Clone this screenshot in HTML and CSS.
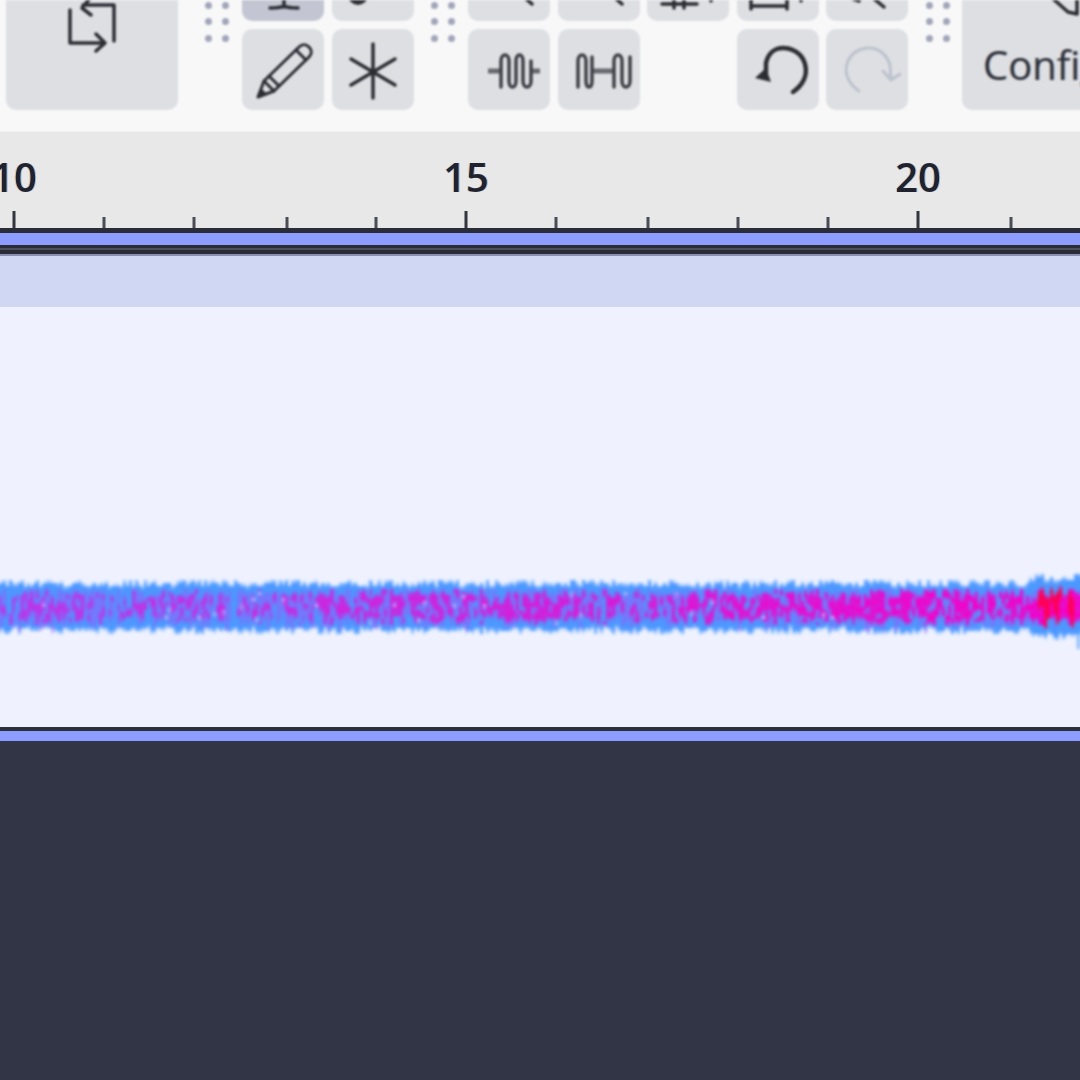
FILE: index.html
```html
<!DOCTYPE html>
<html lang="en">
<head>
    <meta charset="UTF-8">
    <meta name="viewport" content="width=device-width, initial-scale=1.0">
    <title>Audio editor</title>
    <link rel="stylesheet" href="styles.css">
</head>
<body>
    <div class="toolbar-clip">
    <div class="toolbar">
        <button class="tool tool-large" type="button">
            <svg class="icon" viewBox="0 0 172 110">
                <path d="M64 10V43H97M108 41V5H77"/>
                <path d="M85 -3L76 8L85 15M90 34L99 43L90 51"/>
            </svg>
        </button>
        <div class="grip"><i></i><i></i><i></i><i></i><i></i><i></i></div>
        <div class="tool-group tool-group-mode">
            <button class="tool tool-active" type="button">
                <svg class="icon" viewBox="0 0 82 21"><path d="M42 -2V7M28 8C34 8 38 8 42 6C46 8 50 8 56 8"/></svg>
            </button>
            <button class="tool" type="button">
                <svg class="icon" viewBox="0 0 82 21"><circle class="solid" cx="26" cy="-5" r="10"/></svg>
            </button>
            <button class="tool" type="button">
                <svg class="icon icon-thin" viewBox="0 0 82 81">
                    <path d="M16 68L22 52L57 18C60 15 64 15 67 18C70 21 70 25 67 28L32 62Z"/>
                    <path d="M22 52L32 62M54 21L64 31M27 47L37 57"/>
                    <path class="solid" d="M16 68L19 59L25 65Z"/>
                </svg>
            </button>
            <button class="tool" type="button">
                <svg class="icon" viewBox="0 0 82 81">
                    <path d="M41 15V69M19 30L63 56M19 56L63 30"/>
                    <circle class="solid" cx="41" cy="43" r="3.5"/>
                </svg>
            </button>
        </div>
        <div class="grip"><i></i><i></i><i></i><i></i><i></i><i></i></div>
        <div class="tool-group tool-group-edit">
            <button class="tool" type="button">
                <svg class="icon" viewBox="0 0 82 21"><path d="M56 -3L64 4"/></svg>
            </button>
            <button class="tool" type="button">
                <svg class="icon" viewBox="0 0 82 21"><path d="M56 -3L64 4"/></svg>
            </button>
            <button class="tool" type="button">
                <svg class="icon" viewBox="0 0 82 21">
                    <path d="M15 4H50M27 1V8M37 1V8"/>
                    <path d="M64 0V1"/>
                </svg>
            </button>
            <button class="tool" type="button">
                <svg class="icon" viewBox="0 0 82 21">
                    <path d="M14 -2V9M14 6H50M50 -2V9M64 0V1"/>
                </svg>
            </button>
            <button class="tool" type="button">
                <svg class="icon" viewBox="0 0 82 21"><path d="M25 -2L33 1M47 -2L58 7"/></svg>
            </button>
            <button class="tool" type="button">
                <svg class="icon icon-wave" viewBox="0 0 82 81">
                    <path class="wave-line" d="M20 42H32M63 42H72"/>
                    <path d="M33 58V32C33 24 41 24 41 32V52C41 60 48 60 48 52V32C48 24 55 24 55 32V52C55 60 63 60 63 52V32"/>
                </svg>
            </button>
            <button class="tool" type="button">
                <svg class="icon icon-wave" viewBox="0 0 82 81">
                    <path class="wave-line" d="M34 42H56"/>
                    <path d="M20 58V32C20 24 28 24 28 32V52C28 60 34 60 34 52V28M56 58V32C56 24 64 24 64 32V52C64 60 72 60 72 52V28"/>
                </svg>
            </button>
            <span class="tool-empty"></span>
            <button class="tool" type="button">
                <svg class="icon icon-history" viewBox="0 0 82 81">
                    <path d="M56 63C66 56 71 46 68 35C65 24 55 19 46 19C37 19 31 25 29 34L29 44"/>
                    <path class="solid" d="M18 49L29 39L34 53Z"/>
                </svg>
            </button>
            <button class="tool" type="button">
                <svg class="icon icon-history icon-disabled" viewBox="0 0 82 81">
                    <path d="M33 62C23 55 18 45 21 35C24 24 34 19 43 19C53 19 61 26 64 36L65 50"/>
                    <path d="M57 42L65 51L74 45"/>
                </svg>
            </button>
        </div>
        <div class="grip"><i></i><i></i><i></i><i></i><i></i><i></i></div>
        <button class="tool tool-config" type="button">
            <svg class="icon icon-corner" viewBox="0 0 118 21"><path d="M88 -4L106 12L115 14V-4"/></svg>
            <span class="tool-label">Configuración</span>
        </button>
    </div>
    </div>

    <div class="ruler">
        <svg class="ruler-scale" viewBox="0 0 1080 96">
            <text x="14" y="60">10</text>
            <text x="466" y="60">15</text>
            <text x="918" y="60">20</text>
            <path class="tick-major" d="M14 79V96M466 79V96M918 79V96"/>
            <path class="tick-minor" d="M104 85V96M194 85V96M287 85V96M376 85V96M556 85V96M648 85V96M738 85V96M828 85V96M1011 85V96"/>
        </svg>
    </div>

    <div class="timeline-top"></div>
    <div class="clip-name"></div>
    <div class="clip-body">
        <canvas id="wave" class="wave" width="364" height="140"></canvas>
    </div>
    <div class="timeline-bottom"></div>
    <div class="empty-area"></div>

    <script src="script.js"></script>
</body>
</html>
```

FILE: styles.css
```css
body {
    margin: 0;
    width: 1080px;
    height: 1080px;
    overflow: hidden;
    display: flex;
    flex-direction: column;
    background-color: #323545;
    font-family: 'Open Sans', 'Liberation Sans', sans-serif;
}

.toolbar-clip {
    height: 131px;
    flex: none;
    background-color: #f8f8f9;
    border-bottom: 1px solid #f0f0f1;
    overflow: hidden;
}

.toolbar {
    width: 1092px;
    height: 145px;
    box-sizing: border-box;
    margin: -6px 0 0 -6px;
    padding: 6px 0 0 6px;
    display: flex;
    align-items: flex-start;
    background-color: #f8f8f9;
    filter: blur(0.9px);
}

.tool {
    display: block;
    position: relative;
    width: 100%;
    height: 100%;
    padding: 0;
    border: none;
    border-radius: 0 0 10px 10px;
    background-color: #dedfe3;
    font-family: inherit;
    overflow: hidden;
}

.tool-group .tool:nth-child(n+3),
.tool-group-edit .tool:nth-child(n+6) {
    border-radius: 10px;
}

.tool-group-edit .tool:nth-child(-n+5) {
    border-radius: 0 0 10px 10px;
}

.tool-active {
    background-color: #c3c6d2;
}

.tool-large {
    width: 172px;
    height: 110px;
    margin-left: 6px;
    flex: none;
}

.tool-group {
    display: grid;
    grid-template-rows: 21px 81px;
    row-gap: 8px;
    flex: none;
}

.tool-group-mode {
    grid-template-columns: repeat(2, 82px);
    column-gap: 8px;
}

.tool-group-edit {
    grid-template-columns: repeat(5, 82px);
    column-gap: 7.5px;
}

.tool-config {
    width: 130px;
    height: 110px;
    flex: none;
    margin-left: 12.5px;
    border-radius: 0 0 0 10px;
}

.tool-label {
    position: absolute;
    left: 21px;
    top: 37px;
    font-size: 40px;
    line-height: 56px;
    white-space: nowrap;
    color: #2c2f3a;
    text-shadow: -1px 0 rgba(214, 130, 40, 0.35), 1px 0 rgba(40, 130, 220, 0.35);
}

.grip {
    flex: none;
    display: grid;
    grid-template-columns: 7px 7px;
    column-gap: 10px;
    row-gap: 9.5px;
    padding-top: 1.5px;
}

.grip i {
    width: 7px;
    height: 7px;
    border-radius: 50%;
    background-color: #a3a6ba;
}

.toolbar > .grip:nth-child(2) {
    margin: 0 13px 0 27px;
}

.toolbar > .grip:nth-child(4) {
    margin: 0 13.5px 0 16.5px;
}

.toolbar > .grip:nth-child(6) {
    margin: 0 0 0 17.5px;
}

.icon {
    display: block;
    width: 100%;
    height: 100%;
    overflow: visible;
    fill: none;
    stroke: #2b2d33;
    stroke-width: 3.5;
    stroke-linecap: round;
    stroke-linejoin: round;
}

.icon .solid {
    fill: #2b2d33;
    stroke: none;
}

.icon-thin {
    stroke-width: 3;
}

.icon-wave {
    stroke: #3e4046;
    stroke-width: 3.5;
}

.icon-wave .wave-line {
    stroke: #66686f;
    stroke-width: 5;
    stroke-linecap: butt;
}

.icon-history {
    stroke-width: 4.5;
}

.icon-disabled {
    stroke: #bcc3cd;
    stroke-width: 3;
}

.icon-corner {
    position: absolute;
    top: 0;
    left: 0;
    width: 118px;
    height: 21px;
}

.ruler {
    height: 96px;
    flex: none;
    background-color: #e8e8e9;
    overflow: hidden;
}

.ruler-scale {
    display: block;
    width: 1080px;
    height: 96px;
    filter: blur(0.7px);
}

.ruler-scale text {
    font-size: 40px;
    font-weight: 600;
    text-anchor: middle;
    fill: #20232f;
    text-shadow: -1px 0 rgba(214, 130, 40, 0.45), 1px 0 rgba(40, 130, 220, 0.45);
}

.tick-major,
.tick-minor {
    fill: none;
    stroke-width: 3;
    stroke: #33353f;
}

.tick-minor {
    stroke: #4a4c56;
}

.timeline-top {
    height: 28px;
    flex: none;
    margin: 0 -6px;
    background:
        linear-gradient(#2a2c38, #2a2c38) 0 0 / 100% 5px no-repeat,
        linear-gradient(#2a2c38, #2a2c38) 0 17px / 100% 3px no-repeat,
        linear-gradient(#4c4e5a, #4c4e5a) 0 20px / 100% 2px no-repeat,
        linear-gradient(#2a2c38, #2a2c38) 0 22px / 100% 4px no-repeat,
        linear-gradient(#8b90b0, #8b90b0) 0 26px / 100% 2px no-repeat,
        #8c9cff;
    filter: blur(0.5px);
}

.clip-name {
    height: 51px;
    flex: none;
    background-color: #d0d7f2;
}

.clip-body {
    height: 420px;
    flex: none;
    background-color: #eff2fe;
    overflow: hidden;
}

.wave {
    display: block;
    width: 1092px;
    height: 420px;
    margin-left: -6px;
    filter: blur(1.4px);
}

.timeline-bottom {
    height: 14px;
    flex: none;
    box-sizing: border-box;
    margin: 0 -6px;
    background-color: #8c9cff;
    border-top: 4px solid #2d2f3b;
    filter: blur(0.5px);
}

.empty-area {
    flex: 1;
    background-color: #323545;
}
```

FILE: script.js
```js
document.addEventListener('DOMContentLoaded', function () {
    const canvas = document.getElementById('wave');
    const ctx = canvas.getContext('2d');
    const center = 100;

    let seed = 4711;
    function rnd() {
        seed = (seed * 16807) % 2147483647;
        return seed / 2147483647;
    }

    // violeta a la izquierda, rosa a la derecha
    function innerColor(x) {
        const t = x / 345;
        const r = Math.round(185 + 60 * t);
        const g = Math.round(55 - 55 * t);
        const b = Math.round(235 - 35 * t);
        return `rgb(${r}, ${g}, ${b})`;
    }

    // el canvas empieza 2px antes del borde de la pagina
    for (let c = 0; c < 364; c++) {
        const x = c - 2;
        const loud = x > 342 ? 2 : 0;
        const up = 6.5 + rnd() * 2.5 + loud;
        const down = 6.5 + rnd() * 2.5 + loud;

        ctx.fillStyle = 'rgb(76, 152, 255)';
        ctx.fillRect(c, center - up, 1, up + down);

        // capa intermedia mas violeta, irregular por columna
        if (rnd() > 0.2) {
            ctx.fillStyle = 'rgba(140, 100, 250, 0.6)';
            ctx.fillRect(c, center - 3 - rnd() * 3, 1, 6 + rnd() * 6);
        }

        const patch = Math.sin(x / 9) + Math.sin(x / 23 + 1);
        const chance = 0.3 + x / 800 + patch * 0.1;
        const reach = 3 + rnd() * 3;
        let pos = center - reach;
        while (pos < center + reach) {
            const len = 1 + rnd() * 2.5;
            if (rnd() < chance || x > 345) {
                ctx.fillStyle = innerColor(x);
                ctx.fillRect(c, pos, 1, Math.min(len, center + reach - pos));
            }
            pos += len;
        }

        if (x > 345 && x < 358 && rnd() > 0.3) {
            ctx.fillStyle = 'rgb(255, 0, 85)';
            ctx.fillRect(c, center - 2 - rnd() * 5, 1, 4 + rnd() * 8);
        }

        if (rnd() > 0.9 && x < 280) {
            ctx.fillStyle = 'rgb(200, 205, 255)';
            ctx.fillRect(c, center - 5 + rnd() * 10, 1, 1);
        }
    }

    ctx.fillStyle = 'rgba(70, 150, 255, 0.7)';
    ctx.fillRect(361, center + 6, 1, 8);
});
```
